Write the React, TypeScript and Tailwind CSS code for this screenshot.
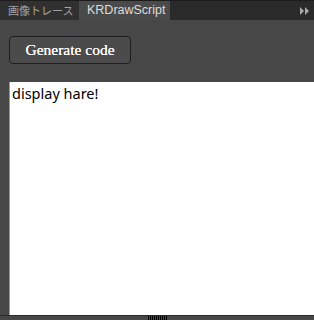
export default function App() {
  return (
    <div className="w-[314px] h-[320px] flex flex-col bg-[#474747] overflow-hidden">
      <div className="h-[20px] flex bg-[#2a2a2a] border-t border-[#1c1c1c] shrink-0">
        <div className="w-[79px] flex items-center pl-[8px] bg-[#303030] text-[#a4a4a4] text-[11px] font-['Noto_Sans_CJK_JP',sans-serif] leading-none">
          画像トレース
        </div>
        <div className="w-[91px] flex items-center pl-[8px] bg-[#4a4a4a] text-[#dcdcdc] text-[12.5px] font-['Liberation_Sans',sans-serif] leading-none">
          KRDrawScript
        </div>
        <div className="flex-1 flex items-center justify-end pr-[4px]">
          <svg width="10" height="8" viewBox="0 0 10 8">
            <path d="M0 0 L4 4 L0 8 Z M5 0 L9 4 L5 8 Z" fill="#a8a8a8" />
          </svg>
        </div>
      </div>
      <div className="flex-1 flex flex-col pt-[16px]">
        <div className="pl-[9px]">
          <button className="w-[122px] h-[28px] rounded-[4px] border border-[#1e1e1e] bg-[#4b4b4b] text-white text-[15.5px] font-['Liberation_Serif',serif] font-normal [text-shadow:0_0_0.6px_#fff]">
            Generate code
          </button>
        </div>
        <div className="flex-1 ml-[9px] mt-[18px] bg-white border-l border-[#9a9a9a] pl-[2px] pt-[2px] text-black text-[14.5px] leading-[18px] font-['Noto_Sans',sans-serif]">
          display hare!
        </div>
      </div>
      <div className="h-[5px] shrink-0 border-t border-[#2a2a2a] flex justify-center">
        <div className="w-[19px] h-full flex justify-between">
          {Array.from({ length: 10 }).map((_, i) => (
            <div key={i} className="w-px h-full bg-black" />
          ))}
        </div>
      </div>
    </div>
  )
}
